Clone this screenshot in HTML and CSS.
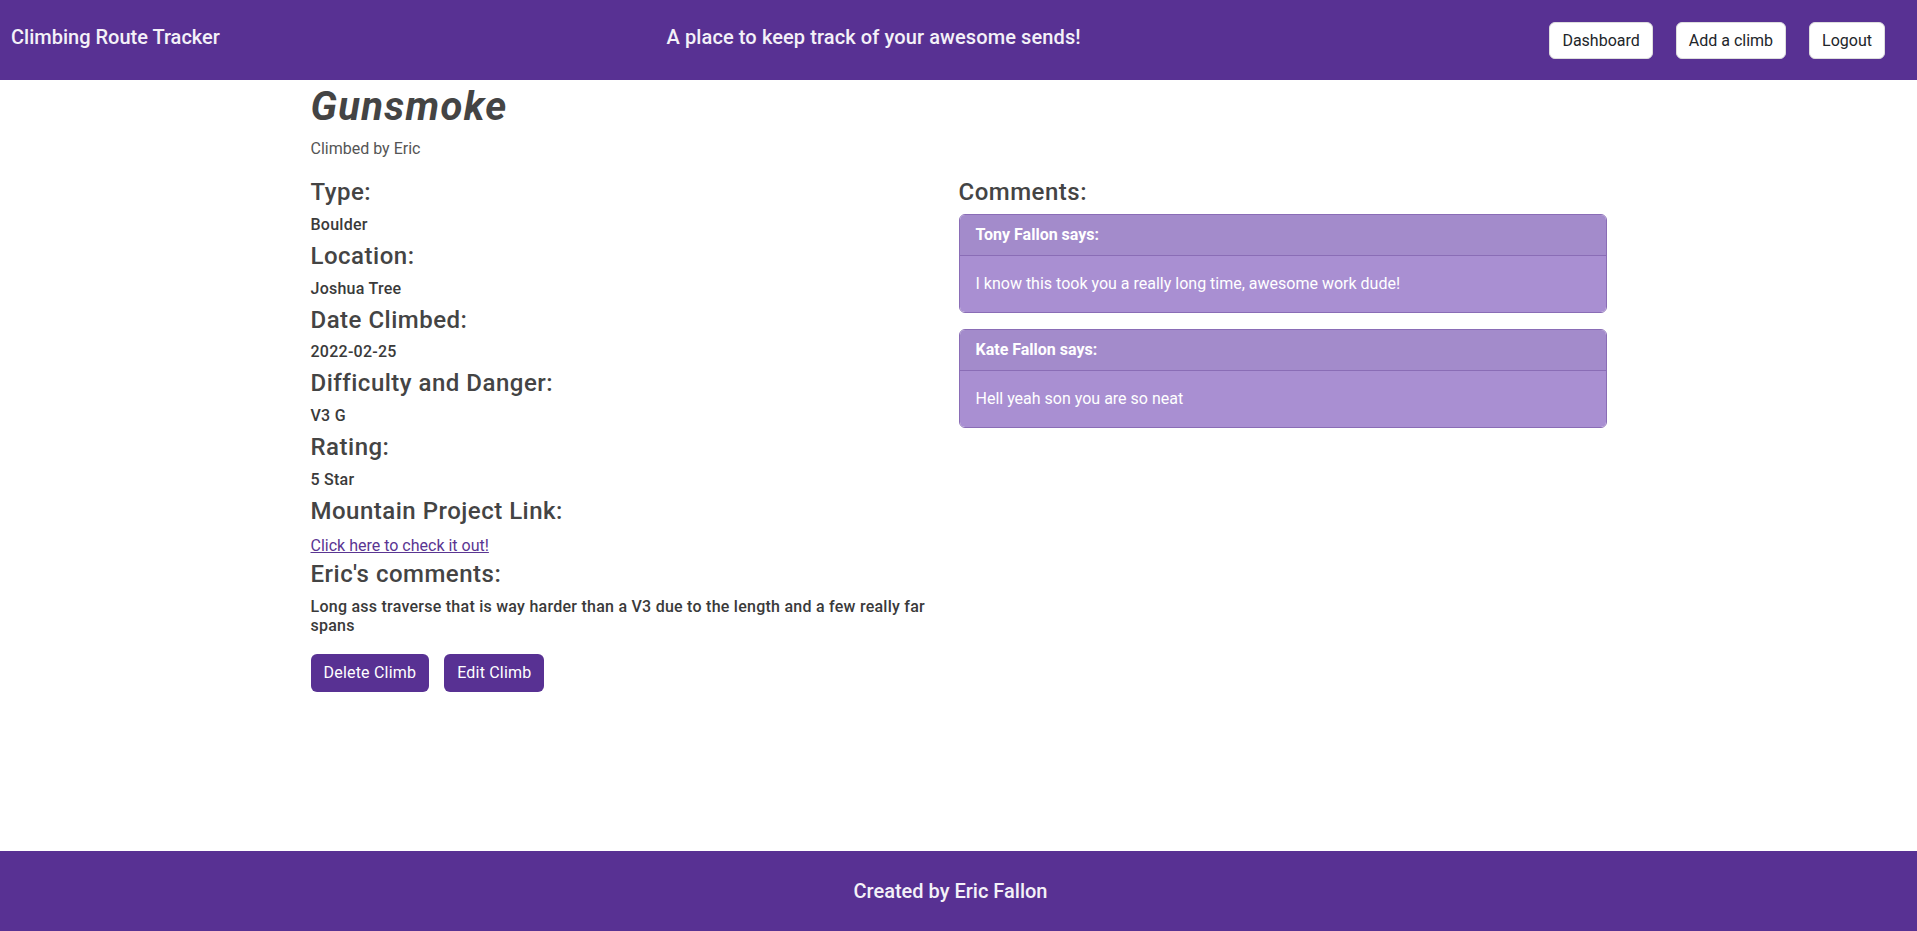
FILE: index.html
```html
<!DOCTYPE html>
<html lang="en">
<head>
<meta charset="utf-8">
<title>Climbing Route Tracker</title>
<link rel="stylesheet" href="styles.css">
</head>
<body>
<div class="page">
  <header class="topbar">
    <div class="brand">Climbing Route Tracker</div>
    <div class="tagline">A place to keep track of your awesome sends!</div>
    <nav class="nav">
      <a class="nav-btn" href="#">Dashboard</a>
      <a class="nav-btn" href="#">Add a climb</a>
      <a class="nav-btn" href="#">Logout</a>
    </nav>
  </header>

  <main class="container">
    <h1 class="title">Gunsmoke</h1>
    <p class="byline">Climbed by Eric</p>
    <div class="columns">
      <section class="col">
        <h4 class="label">Type:</h4>
        <h6 class="value">Boulder</h6>
        <h4 class="label">Location:</h4>
        <h6 class="value">Joshua Tree</h6>
        <h4 class="label">Date Climbed:</h4>
        <h6 class="value">2022-02-25</h6>
        <h4 class="label">Difficulty and Danger:</h4>
        <h6 class="value">V3 G</h6>
        <h4 class="label">Rating:</h4>
        <h6 class="value">5 Star</h6>
        <h4 class="label">Mountain Project Link:</h4>
        <div class="link-row"><a class="mp-link" href="#">Click here to check it out!</a></div>
        <h4 class="label">Eric's comments:</h4>
        <h6 class="value">Long ass traverse that is way harder than a V3 due to the length and a few really far spans</h6>
        <div class="actions">
          <a class="btn-purple" href="#">Delete Climb</a>
          <a class="btn-purple" href="#">Edit Climb</a>
        </div>
      </section>
      <section class="col">
        <h4 class="label">Comments:</h4>
        <div class="card">
          <div class="card-header">Tony Fallon says:</div>
          <div class="card-body">I know this took you a really long time, awesome work dude!</div>
        </div>
        <div class="card">
          <div class="card-header">Kate Fallon says:</div>
          <div class="card-body">Hell yeah son you are so neat</div>
        </div>
      </section>
    </div>
  </main>

  <footer class="footer">Created by Eric Fallon</footer>
</div>
</body>
</html>
```

FILE: styles.css
```css
* { box-sizing: border-box; }

html, body {
  margin: 0;
  padding: 0;
}

body {
  font-family: Roboto, Lato, sans-serif;
  font-size: 16px;
  line-height: 1.5;
  color: #444;
  background: #fff;
}

.page {
  min-height: 100vh;
  display: flex;
  flex-direction: column;
}

.topbar {
  height: 80px;
  background: #583193;
  display: flex;
  align-items: center;
  justify-content: space-between;
  padding: 0 32px 0 11px;
  color: #f4f1f8;
}

.brand {
  font-size: 20px;
  font-weight: 500;
  margin-top: -6px;
}

.tagline {
  font-size: 20px;
  font-weight: 500;
  margin-top: -6px;
  margin-right: 22px;
  letter-spacing: 0.1px;
}

.nav {
  display: flex;
  gap: 23px;
}

.nav-btn {
  display: block;
  height: 37px;
  line-height: 35px;
  padding: 0 12px;
  background: #fff;
  color: #212529;
  text-decoration: none;
  border: 1px solid #ddd;
  border-radius: 6px;
  font-size: 16px;
}

.container {
  width: 1296px;
  margin: 0 auto;
  flex: 1;
}

.title {
  margin: 3px 0 6px;
  font-size: 40px;
  line-height: 48px;
  font-weight: 700;
  font-style: italic;
  letter-spacing: 1.3px;
  color: #444;
}

.byline {
  margin: 0 0 17px;
  font-size: 16px;
  line-height: 24px;
  color: #555;
}

.columns {
  display: flex;
}

.col {
  width: 648px;
}

.label {
  margin: 0 0 8px;
  font-size: 24px;
  line-height: 28.8px;
  font-weight: 500;
  letter-spacing: 0.5px;
  color: #444;
}

.col + .col .label {
  margin-bottom: 7px;
}

.value {
  margin: 0 0 8px;
  font-size: 16px;
  line-height: 19px;
  font-weight: 500;
  letter-spacing: 0.25px;
  color: #3a3a3a;
}

.link-row {
  line-height: 24px;
  margin-bottom: 2px;
}

.mp-link {
  color: #5a3592;
  font-size: 16px;
}

.actions {
  display: flex;
  gap: 15px;
  margin-top: 19px;
}

.btn-purple {
  display: block;
  height: 38px;
  line-height: 38px;
  padding: 0 13px;
  background: #583193;
  color: #fff;
  text-decoration: none;
  border-radius: 6px;
  font-size: 16px;
  letter-spacing: 0.2px;
}

.card {
  border: 1px solid #8a6db6;
  border-radius: 6px;
  margin-bottom: 16px;
  overflow: hidden;
  color: #fff;
}

.card-header {
  background: #a38bcb;
  padding: 8px 16px;
  line-height: 24px;
  font-size: 16px;
  font-weight: 700;
  border-bottom: 1px solid #8a6db6;
}

.card-body {
  background: #a98fd2;
  padding: 16px;
  line-height: 24px;
  font-size: 16px;
}

.footer {
  height: 80px;
  background: #583193;
  color: #f4f1f8;
  display: flex;
  align-items: center;
  justify-content: center;
  padding-right: 16px;
  font-size: 20px;
  font-weight: 500;
}
```
